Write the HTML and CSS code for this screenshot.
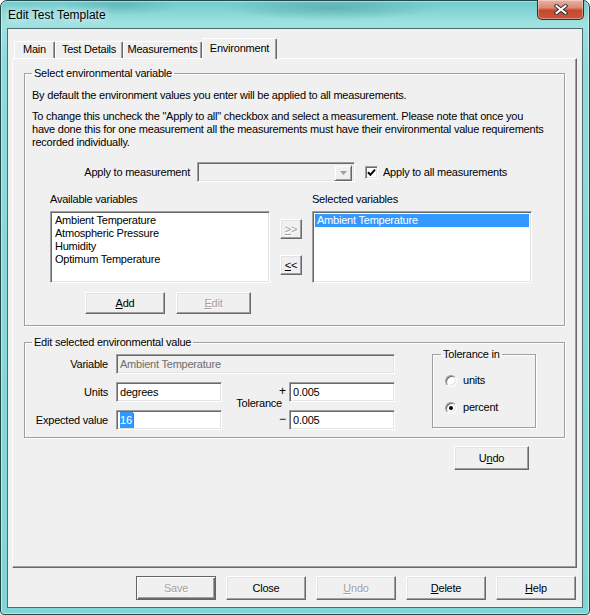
FILE: index.html
```html
<!DOCTYPE html>
<html lang="en">
<head>
  <meta charset="UTF-8" />
  <title>Edit Test Template</title>
  <link rel="stylesheet" href="styles.css">
</head>
<body>

  <!-- Dialog window -->
  <div class="window">

    <!-- Title bar -->
    <div class="titlebar">
      <span class="title">Edit Test Template</span>
      <button class="close-btn" title="Close">
        <svg width="14" height="11" viewBox="0 0 14 11">
          <path d="M2.5 2 L11.5 9 M11.5 2 L2.5 9" stroke="#2b3133" stroke-width="4" stroke-linecap="square" />
          <path d="M2.5 2 L11.5 9 M11.5 2 L2.5 9" stroke="#ffffff" stroke-width="2" stroke-linecap="square" />
        </svg>
      </button>
    </div>

    <div class="client">

      <!-- Tabs -->
      <div class="tabs">
        <div class="tab tab-main">Main</div>
        <div class="tab tab-details">Test Details</div>
        <div class="tab tab-measure">Measurements</div>
        <div class="tab tab-env active">Environment</div>
      </div>

      <div class="tab-panel">

        <!-- Choose variables -->
        <fieldset class="group group-select">
          <legend>Select environmental variable</legend>
          <p class="note">By default the environment values you enter will be applied to all measurements.</p>
          <p class="note note-2">To change this uncheck the "Apply to all" checkbox and select a measurement. Please note that once you<br>have done this for one measurement all the measurements must have their environmental value requirements<br>recorded individually.</p>

          <div class="apply-row">
            <span class="apply-label">Apply to measurement</span>
            <div class="combo">
              <span class="combo-arrow">
                <svg width="7" height="4" viewBox="0 0 7 4"><path d="M0 0h7l-3.5 4z" fill="#a0a0a0" /></svg>
              </span>
            </div>
            <span class="checkbox">
              <svg width="9" height="9" viewBox="0 0 9 9"><path d="M1 4.2 L3.4 6.8 L8 1.6" fill="none" stroke="#000" stroke-width="2" /></svg>
            </span>
            <span class="check-label">Apply to all measurements</span>
          </div>

          <div class="lists">
            <span>Available variables</span>
            <span></span>
            <span>Selected variables</span>

            <div class="listbox">
              <div class="list-item">Ambient Temperature</div>
              <div class="list-item">Atmospheric Pressure</div>
              <div class="list-item">Humidity</div>
              <div class="list-item">Optimum Temperature</div>
            </div>

            <div class="move-btns">
              <button class="btn btn-move" disabled><u>&gt;</u>&gt;</button>
              <button class="btn btn-move"><u>&lt;</u>&lt;</button>
            </div>

            <div class="listbox">
              <div class="list-item selected">Ambient Temperature</div>
            </div>
          </div>

          <div class="var-btns">
            <button class="btn btn-add"><u>A</u>dd</button>
            <button class="btn btn-edit" disabled><u>E</u>dit</button>
          </div>
        </fieldset>

        <!-- Edit the chosen value -->
        <fieldset class="group group-edit">
          <legend>Edit selected environmental value</legend>
          <div class="edit-body">
            <div class="value-grid">
              <span class="field-label row-1">Variable</span>
              <div class="field field-wide disabled">Ambient Temperature</div>

              <span class="field-label row-2">Units</span>
              <div class="field col-2 row-2">degrees</div>

              <div class="tol-mid">
                <span class="tol-word">Tolerance</span>
                <span class="tol-signs"><span>+</span><span>&minus;</span></span>
              </div>
              <div class="field col-4 row-2">0.005</div>

              <span class="field-label row-3">Expected value</span>
              <div class="field col-2 row-3"><span class="sel-text">16</span><span class="caret"></span></div>
              <div class="field col-4 row-3">0.005</div>
            </div>

            <fieldset class="group group-tol">
              <legend>Tolerance in</legend>
              <div class="radio-row first"><span class="radio"></span>units</div>
              <div class="radio-row"><span class="radio on"></span>percent</div>
            </fieldset>
          </div>
        </fieldset>

        <div class="undo-row">
          <button class="btn btn-undo">U<u>n</u>do</button>
        </div>
      </div>

      <!-- Dialog buttons -->
      <div class="dialog-buttons">
        <button class="btn default" disabled>Save</button>
        <button class="btn">Close</button>
        <button class="btn" disabled><u>U</u>ndo</button>
        <button class="btn"><u>D</u>elete</button>
        <button class="btn"><u>H</u>elp</button>
      </div>
    </div>
  </div>

</body>
</html>
```

FILE: styles.css
```css
/* Basic reset */
* {
  margin: 0;
  padding: 0;
  box-sizing: border-box;
}

body {
  width: 590px;
  height: 615px;
  overflow: hidden;
  background: #ffffff;
  font-family: 'Liberation Sans', Arial, sans-serif;
  font-size: 11px;
  letter-spacing: -0.22px;
  color: #000;
}

/* Glass frame round the dialog */
.window {
  width: 590px;
  height: 615px;
  display: flex;
  flex-direction: column;
  padding: 0 6px 6px;
  border: 1px solid #24474a;
  border-radius: 7px 7px 4px 4px;
  background:
    radial-gradient(ellipse 110px 12px at 330px 7px, rgba(40, 120, 125, 0.35), transparent),
    radial-gradient(ellipse 60px 10px at 120px 4px, rgba(40, 120, 125, 0.25), transparent),
    linear-gradient(180deg, #6fcbcd 0, #9fe1e1 22px, #8edbdb 60px, #82d5d6 100%);
  box-shadow: inset 0 0 0 1px rgba(255, 255, 255, 0.45);
}

.titlebar {
  height: 27px;
  display: flex;
  align-items: flex-start;
}

.title {
  flex: 1;
  font-size: 12px;
  letter-spacing: 0;
  line-height: 13px;
  padding: 8px 0 0 1px;
  text-shadow: 0 0 6px #fff, 0 0 10px rgba(255, 255, 255, 0.8);
}

.close-btn {
  width: 47px;
  height: 20px;
  margin: -1px -1px 0 0;
  display: flex;
  justify-content: center;
  align-items: center;
  border: 1px solid #5b2116;
  border-top: none;
  border-radius: 0 0 5px 5px;
  background: linear-gradient(180deg, #eab2a4 0%, #dc8a74 40%, #c5482d 55%, #c8583c 100%);
  box-shadow: inset 0 0 0 1px rgba(255, 255, 255, 0.35);
}

/* Dialog face */
.client {
  flex: 1;
  display: flex;
  flex-direction: column;
  padding: 9px 5px 7px 4px;
  border: 1px solid #4c6c70;
  background: #f0f0f0;
}

/* Tab strip */
.tabs {
  height: 20px;
  display: flex;
  align-items: flex-end;
  padding-left: 2px;
  position: relative;
  z-index: 1;
}

.tab {
  height: 17px;
  line-height: 15px;
  text-align: center;
  border-top: 1px solid #fff;
  border-left: 1px solid #fff;
  border-right: 1px solid #696969;
  border-radius: 2px 2px 0 0;
  box-shadow: inset -1px 0 #a0a0a0;
  background: #f0f0f0;
}

.tab-main { width: 41px; }
.tab-details { width: 68px; }
.tab-measure { width: 79px; }
.tab-env { width: 75px; }

.tab.active {
  height: 21px;
  margin-bottom: -1px;
  padding-top: 2px;
}

.tab-panel {
  height: 510px;
  padding: 8px 11px 0;
  border-top: 1px solid #fff;
  border-left: 1px solid #fff;
  border-right: 1px solid #696969;
  border-bottom: 1px solid #696969;
  box-shadow: inset -1px -1px #a0a0a0;
}

/* Group boxes */
.group {
  border: 1px solid #a0a0a0;
  box-shadow: inset 1px 1px #fff, 1px 1px #fff;
  padding: 0 7px 11px;
  min-width: 0;
}

.group legend {
  padding: 0 2px;
  line-height: 13px;
}

.note {
  margin-top: 9px;
  line-height: 13px;
}

.note-2 {
  margin-top: 8px;
}

.apply-row {
  height: 20px;
  margin-top: 13px;
  display: flex;
  align-items: center;
}

.apply-label {
  width: 158px;
  text-align: right;
  margin-right: 7px;
}

/* Sunken borders shared by fields, lists and checkboxes */
.combo,
.field,
.listbox,
.checkbox {
  border: 1px solid;
  border-color: #a0a0a0 #fff #fff #a0a0a0;
  box-shadow: inset 1px 1px #696969, inset -1px -1px #e3e3e3;
}

.combo {
  width: 158px;
  height: 20px;
  display: flex;
  justify-content: flex-end;
  padding: 2px;
  background: #f0f0f0;
}

.combo-arrow {
  width: 18px;
  height: 16px;
  display: flex;
  justify-content: center;
  align-items: center;
  border: 1px solid;
  border-color: #f0f0f0 #696969 #696969 #f0f0f0;
  box-shadow: inset 1px 1px #fff, inset -1px -1px #a0a0a0;
}

.checkbox {
  width: 13px;
  height: 13px;
  margin-left: 10px;
  display: flex;
  justify-content: center;
  align-items: center;
  background: #fff;
}

.check-label {
  margin-left: 5px;
}

/* Variable lists */
.lists {
  margin-top: 11px;
  padding-left: 18px;
  display: grid;
  grid-template-columns: 220px 22px 220px;
  column-gap: 10px;
  row-gap: 5px;
  line-height: 13px;
}

.listbox {
  height: 72px;
  padding: 2px;
  background: #fff;
}

.list-item {
  padding-left: 2px;
  line-height: 13px;
  white-space: nowrap;
}

.list-item.selected {
  background: #3399ff;
  color: #fff;
}

.move-btns {
  display: flex;
  flex-direction: column;
  gap: 16px;
  padding-top: 8px;
}

/* Buttons */
.btn {
  width: 80px;
  height: 24px;
  font: inherit;
  letter-spacing: inherit;
  color: #000;
  background: #f0f0f0;
  border: 1px solid;
  border-color: #fff #696969 #696969 #fff;
  box-shadow: inset -1px -1px #a0a0a0, inset 1px 1px #e3e3e3;
}

.btn:disabled {
  color: #a0a0a0;
  text-shadow: 1px 1px 0 #fff;
}

.btn.default {
  border-color: #646464;
  box-shadow: inset 1px 1px #fff, inset -1px -1px #696969, inset -2px -2px #a0a0a0;
}

.btn-move {
  width: 22px;
  height: 20px;
}

.var-btns {
  margin-top: 9px;
  padding-left: 53px;
  display: flex;
  gap: 11px;
}

.btn-add {
  height: 22px;
}

.btn-edit {
  width: 75px;
  height: 22px;
}

/* Value editor */
.group-edit {
  margin-top: 10px;
  padding-bottom: 7px;
}

.edit-body {
  display: flex;
  align-items: flex-start;
}

.value-grid {
  margin-top: 5px;
  display: grid;
  grid-template-columns: 84px 106px 67px 106px;
  grid-template-rows: 20px 20px 20px;
  row-gap: 8px;
}

.field-label {
  grid-column: 1;
  padding-right: 8px;
  text-align: right;
  line-height: 20px;
  white-space: nowrap;
}

.field {
  height: 20px;
  padding: 0 3px;
  line-height: 16px;
  background: #fff;
  white-space: nowrap;
  display: flex;
  align-items: center;
}

.field.disabled {
  background: #f0f0f0;
  color: #6d6d6d;
}

.field-wide { grid-column: 2 / 5; grid-row: 1; }
.row-1 { grid-row: 1; }
.row-2 { grid-row: 2; }
.row-3 { grid-row: 3; }
.col-2 { grid-column: 2; }
.col-4 { grid-column: 4; }

.sel-text {
  background: #3399ff;
  color: #fff;
  line-height: 16px;
  padding-right: 1px;
}

.caret {
  width: 1px;
  height: 15px;
  background: #cc6600;
}

.tol-mid {
  grid-column: 3;
  grid-row: 2 / 4;
  display: flex;
  justify-content: flex-end;
  line-height: 13px;
}

.tol-word {
  align-self: center;
  margin: 0 -6px 6px 0;
}

.tol-signs {
  width: 13px;
  display: flex;
  flex-direction: column;
  justify-content: space-between;
  align-items: center;
  padding: 3px 0 4px;
  font-size: 12px;
}

.group-tol {
  width: 104px;
  margin: -1px 0 0 37px;
  padding: 0 8px 13px;
}

.radio-row {
  margin: 14px 0 0 4px;
  display: flex;
  align-items: center;
  gap: 6px;
  line-height: 13px;
}

.radio-row.first {
  margin-top: 13px;
}

.radio {
  width: 12px;
  height: 12px;
  border: 1px solid;
  border-color: #a0a0a0 #fff #fff #a0a0a0;
  border-radius: 50%;
  box-shadow: inset 1px 1px #696969, inset -1px -1px #e3e3e3;
  background: #fff;
  display: flex;
  justify-content: center;
  align-items: center;
}

.radio.on::after {
  content: '';
  width: 4px;
  height: 4px;
  border-radius: 50%;
  background: #000;
}

.undo-row {
  margin-top: 8px;
  padding-right: 36px;
  display: flex;
  justify-content: flex-end;
}

.btn-undo {
  width: 75px;
}

/* OK / Close row */
.dialog-buttons {
  margin: 8px 1px 0 0;
  display: flex;
  justify-content: flex-end;
  gap: 10px;
}
```
